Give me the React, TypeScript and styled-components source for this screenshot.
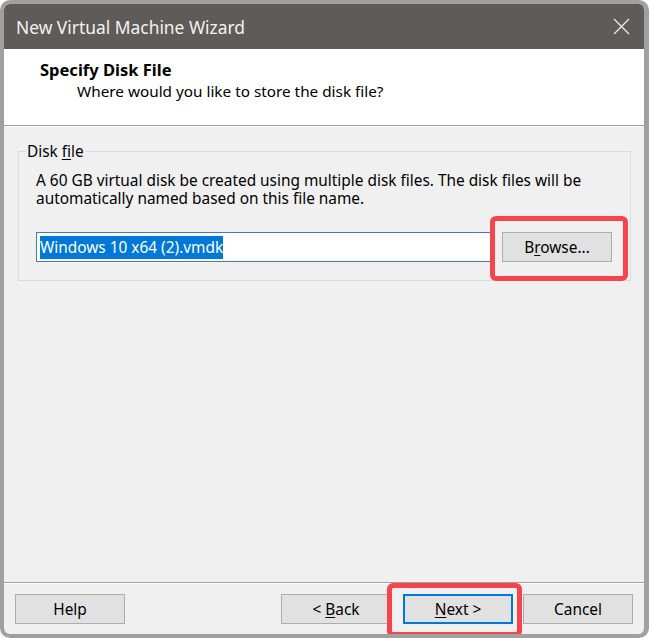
import React from "react";
import styled, { createGlobalStyle } from "styled-components";

const Global = createGlobalStyle`
  html, body { margin: 0; padding: 0; background: #ffffff; }
  body { font-family: "Noto Sans", "Open Sans", sans-serif; }
`;

const Window = styled.div`
  box-sizing: border-box;
  width: 649px;
  height: 638px;
  border: 4px solid #a0a0a0;
  border-right-width: 5px;
  border-radius: 10px;
  overflow: hidden;
  display: flex;
  flex-direction: column;
  background: #f0f0f0;
`;

const TitleBar = styled.div`
  height: 45px;
  flex: none;
  background: #5f5b58;
  display: flex;
  align-items: center;
  justify-content: space-between;
  padding: 0 14px 0 12px;
  color: #f2f2f2;
  font-size: 17.4px;
`;

const CloseIcon = styled.svg`
  width: 17px;
  height: 17px;
  display: block;
`;

const Header = styled.div`
  height: 77px;
  flex: none;
  background: #ffffff;
  border-bottom: 1px solid #a0a0a0;
  padding: 9px 0 0 36px;
  box-sizing: border-box;
  display: flex;
  flex-direction: column;
  gap: 0px;
`;

const HeaderTitle = styled.div`
  font-weight: 700;
  font-size: 16.5px;
  color: #000;
`;

const HeaderSub = styled.div`
  font-size: 15.3px;
  color: #000;
  padding-left: 37px;
`;

const Body = styled.div`
  flex: 1;
  padding: 14px 13px 0 14px;
  border-top: 1px solid #ffffff;
`;

const Group = styled.fieldset`
  margin: 0;
  border: 1px solid #dcdcdc;
  padding: 10px 18px 18px 17px;
  min-width: 0;
`;

const Legend = styled.legend`
  font-size: 15.4px;
  padding: 0 1px;
  margin-left: -10px;
  color: #000;
`;

const Desc = styled.p`
  margin: 0 0 24px;
  font-size: 15.4px;
  line-height: 18px;
  color: #000;
`;

const Row = styled.div`
  display: flex;
  align-items: center;
  gap: 10px;
`;

const Input = styled.div`
  flex: 1;
  height: 30px;
  box-sizing: border-box;
  border: 1px solid #3d7dbf;
  background: #fff;
  display: flex;
  align-items: center;
  padding-left: 3px;
  font-size: 15.4px;
`;

const Selected = styled.span`
  background: #0078d7;
  color: #fff;
  line-height: 23px;
`;

const Button = styled.button<{ $focused?: boolean }>`
  width: 110px;
  height: 30px;
  box-sizing: border-box;
  background: #e1e1e1;
  border: ${(p) => (p.$focused ? "2px solid #0078d7" : "1px solid #adadad")};
  font-family: inherit;
  font-size: 15.4px;
  color: #000;
  padding: 0;
  cursor: default;
`;

const Highlight = styled.div<{ $t: number; $r: number; $b: number; $l: number }>`
  position: relative;
  display: flex;
  &::after {
    content: "";
    position: absolute;
    top: ${(p) => -p.$t}px;
    right: ${(p) => -p.$r}px;
    bottom: ${(p) => -p.$b}px;
    left: ${(p) => -p.$l}px;
    border: 5px solid #f5444b;
    border-radius: 6px;
    pointer-events: none;
  }
`;

const Footer = styled.div`
  flex: none;
  height: 52px;
  border-top: 1px solid #a0a0a0;
  box-shadow: inset 0 1px 0 #ffffff;
  display: flex;
  align-items: flex-start;
  padding: 11px 11px 0 11px;
  box-sizing: border-box;
`;

const Spacer = styled.div`
  flex: 1;
`;

const ButtonGroup = styled.div`
  display: flex;
  align-items: center;
`;

const Slot = styled.div<{ $gap: number }>`
  display: flex;
  margin-right: ${(p) => p.$gap}px;
`;

const U = styled.span`
  text-decoration: underline;
  text-underline-offset: 2px;
`;

export default function App() {
  return (
    <>
      <Global />
      <Window>
        <TitleBar>
          <span>New Virtual Machine Wizard</span>
          <CloseIcon viewBox="0 0 17 17">
            <path d="M1 1 L16 16 M16 1 L1 16" stroke="#f2f2f2" strokeWidth="1.2" fill="none" />
          </CloseIcon>
        </TitleBar>
        <Header>
          <HeaderTitle>Specify Disk File</HeaderTitle>
          <HeaderSub>Where would you like to store the disk file?</HeaderSub>
        </Header>
        <Body>
          <Group>
            <Legend>
              Disk <U>f</U>ile
            </Legend>
            <Desc>
              A 60 GB virtual disk be created using multiple disk files. The disk files will be automatically named
              based on this file name.
            </Desc>
            <Row>
              <Input>
                <Selected>Windows 10 x64 (2).vmdk</Selected>
              </Input>
              <Highlight $t={16} $r={16} $b={19} $l={12}>
                <Button>
                  B<U>r</U>owse...
                </Button>
              </Highlight>
            </Row>
          </Group>
        </Body>
        <Footer>
          <Button>Help</Button>
          <Spacer />
          <ButtonGroup>
            <Slot $gap={12}>
              <Button>
                &lt; <U>B</U>ack
              </Button>
            </Slot>
            <Slot $gap={10}>
              <Highlight $t={11} $r={9} $b={13} $l={16}>
                <Button $focused>
                  <U>N</U>ext &gt;
                </Button>
              </Highlight>
            </Slot>
            <Button>Cancel</Button>
          </ButtonGroup>
        </Footer>
      </Window>
    </>
  );
}
